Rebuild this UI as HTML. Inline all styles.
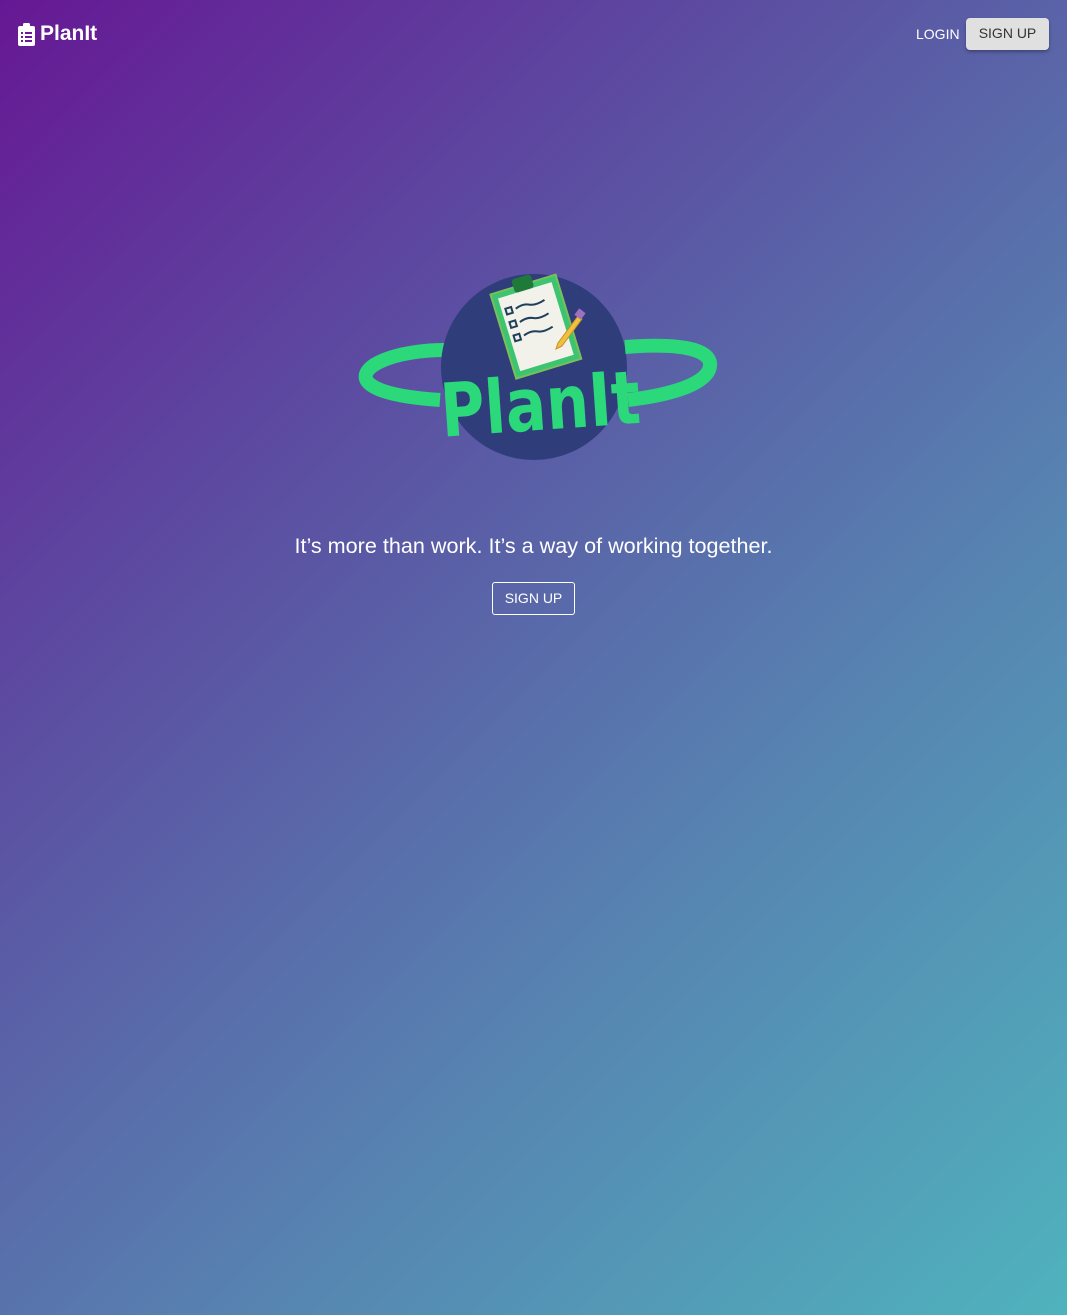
<!DOCTYPE html>
<html><head><meta charset="utf-8"><style>
html,body{margin:0;padding:0}
body{width:1067px;height:1315px;overflow:hidden;background:linear-gradient(135deg,#661894 0%,#5b53a3 35%,#5783b1 65%,#4fb3bd 100%);font-family:"Liberation Sans",sans-serif;color:#fff;position:relative}
.brand{position:absolute;left:18px;top:22px;font-weight:bold;font-size:21px;display:flex;align-items:center;gap:5px}
.login{position:absolute;left:916px;top:26px;font-size:14px}
.su{position:absolute;left:966px;top:18px;width:83px;height:32px;background:#e0e0e0;color:#333;border-radius:4px;font-size:14px;line-height:31px;text-align:center;box-shadow:0 2px 3px rgba(0,0,0,.3)}
.tag{position:absolute;left:0;width:1067px;top:533px;text-align:center;font-size:21.6px}
.su2{position:absolute;left:492px;top:582px;width:81px;height:31px;border:1px solid #fff;border-radius:3px;font-size:14px;line-height:31px;text-align:center}
</style></head><body>
<div class="brand"><svg width="17" height="23" viewBox="0 0 17 23"><rect x="0" y="3" width="17" height="20" rx="2" fill="#fff"/><rect x="5" y="0" width="7" height="6" rx="1.5" fill="#fff"/><g fill="#6a1c98"><rect x="3" y="9" width="2" height="2"/><rect x="7" y="9" width="7" height="2"/><rect x="3" y="13" width="2" height="2"/><rect x="7" y="13" width="7" height="2"/><rect x="3" y="17" width="2" height="2"/><rect x="7" y="17" width="7" height="2"/></g></svg>PlanIt</div>
<div class="login">LOGIN</div>
<div class="su">SIGN UP</div>
<svg style="position:absolute;left:350px;top:260px" width="380" height="210" viewBox="350 260 380 210">
<path d="M440 400 C 365 395 355 378 374 365 C 395 352 430 350 445 350" fill="none" stroke="#2bd87a" stroke-width="14"/>
<circle cx="534" cy="367" r="93" fill="#2f3d7b"/>
<path d="M625 347 C 690 342 716 352 709 370 C 702 385 670 395 628 400" fill="none" stroke="#2bd87a" stroke-width="14"/>
<g transform="rotate(-17 537 320)">
<rect x="500" y="282" width="68" height="88" fill="#3cc470" stroke="#7bbf5a" stroke-width="2"/>
<rect x="506" y="288" width="56" height="76" fill="#f2f1ea"/>
<rect x="524" y="274" width="20" height="14" rx="3" fill="#1f7a3a"/>
<g fill="none" stroke="#1f3f5a" stroke-width="2"><rect x="510" y="300" width="6" height="6"/><rect x="510" y="314" width="6" height="6"/><rect x="510" y="328" width="6" height="6"/>
<path d="M520 303 q8 -3 14 0 t16 0"/><path d="M520 317 q8 -3 14 0 t16 0"/><path d="M520 331 q8 -3 14 0 t16 0"/></g>
</g>
<path d="M578 316 l-20 27 l-2 6 l6 -3 l20 -27z" fill="#f0c040" stroke="#c89020"/>
<rect x="576" y="310" width="8" height="8" fill="#a070c0" transform="rotate(37 580 314)"/>
<text x="440" y="430" textLength="200" lengthAdjust="spacingAndGlyphs" font-family="DejaVu Sans" font-weight="bold" font-size="74" fill="#2bd87a" transform="rotate(-4 537 400)">PlanIt</text>
</svg>
<div class="tag">It’s more than work. It’s a way of working together.</div>
<div class="su2">SIGN UP</div>
</body></html>
